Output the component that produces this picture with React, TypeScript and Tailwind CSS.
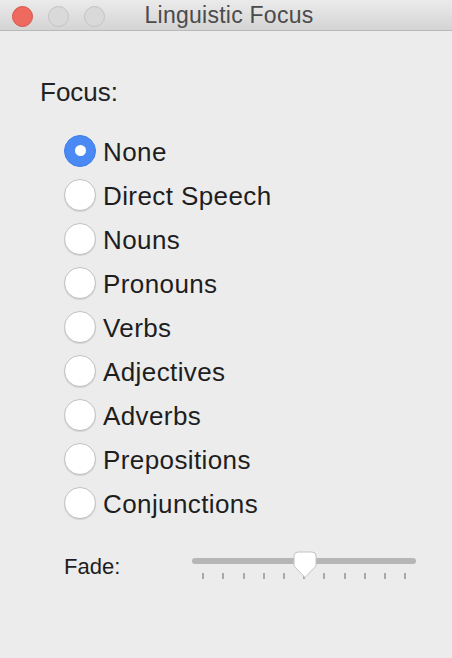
import { useState } from 'react';

const OPTIONS = [
  'None',
  'Direct Speech',
  'Nouns',
  'Pronouns',
  'Verbs',
  'Adjectives',
  'Adverbs',
  'Prepositions',
  'Conjunctions',
];

function Radio({ checked }: { checked: boolean }) {
  if (checked) {
    return (
      <div className="w-[32px] h-[32px] mb-[3px] shrink-0 rounded-full bg-[#4b8af5] border border-[#3f7fe8] flex items-center justify-center">
        <div className="w-[11px] h-[11px] rounded-full bg-white" />
      </div>
    );
  }
  return (
    <div className="w-[32px] h-[32px] mb-[3px] shrink-0 rounded-full bg-white border border-[#c2c2c2] shadow-[0_1px_1px_rgba(0,0,0,0.12)]" />
  );
}

// slider thumb, rounded top with a point facing the ticks
function Thumb() {
  return (
    <svg width="24" height="28" viewBox="0 0 24 28" className="absolute left-[101px] top-[3px]">
      <path
        d="M5 1 H19 Q23 1 23 5 V15 L12 26.5 L1 15 V5 Q1 1 5 1 Z"
        fill="#ffffff"
        stroke="#c4c4c4"
        strokeWidth="1"
      />
    </svg>
  );
}

export default function App() {
  const [focus, setFocus] = useState('None');

  return (
    <div className="w-[452px] h-[658px] bg-[#ececec] flex flex-col" style={{ fontFamily: '"Liberation Sans", Arial, sans-serif' }}>
      {/* title bar */}
      <div className="relative h-[31px] shrink-0 bg-gradient-to-b from-[#ebebeb] to-[#d4d4d4] border-b border-[#b9b9b9] flex items-center justify-center">
        <div className="absolute left-[12px] top-[6px] flex gap-[15px]">
          <div className="w-[21px] h-[21px] rounded-full bg-[#ee6a5f] border border-[#d65448]" />
          <div className="w-[21px] h-[21px] rounded-full bg-[#d9d9d9] border border-[#c3c3c3]" />
          <div className="w-[21px] h-[21px] rounded-full bg-[#d9d9d9] border border-[#c3c3c3]" />
        </div>
        <span className="ml-[6px] text-[23px] leading-[30px] tracking-[0.25px] text-[#4b4b4b]">Linguistic Focus</span>
      </div>

      <div className="pl-[40px] pt-[46px] flex flex-col">
        <div className="text-[26px] leading-[30px] text-[#222]">Focus:</div>

        <div className="mt-[23px] ml-[24px] flex flex-col">
          {OPTIONS.map(opt => (
            <div
              key={opt}
              className="h-[44px] flex items-center gap-[7px] cursor-default"
              onClick={() => setFocus(opt)}
            >
              <Radio checked={focus === opt} />
              <span className="text-[26px] leading-[44px] tracking-[0.4px] text-[#1e1e1e]">{opt}</span>
            </div>
          ))}
        </div>

        <div className="mt-[22px] ml-[24px] flex items-start">
          <span className="mt-[7px] text-[22px] leading-[24px] text-[#1e1e1e]">Fade:</span>
          <div className="relative ml-[72px] w-[224px] h-[34px] flex flex-col">
            <div className="mt-[10px] h-[6px] rounded-full bg-[#b6b6b6]" />
            <div className="mt-[9px] px-[10px] flex justify-between">
              {Array.from({ length: 11 }).map((_, i) => (
                <div key={i} className="w-[2px] h-[6px] bg-[#a9a9a9]" />
              ))}
            </div>
            <Thumb />
          </div>
        </div>
      </div>
    </div>
  );
}
